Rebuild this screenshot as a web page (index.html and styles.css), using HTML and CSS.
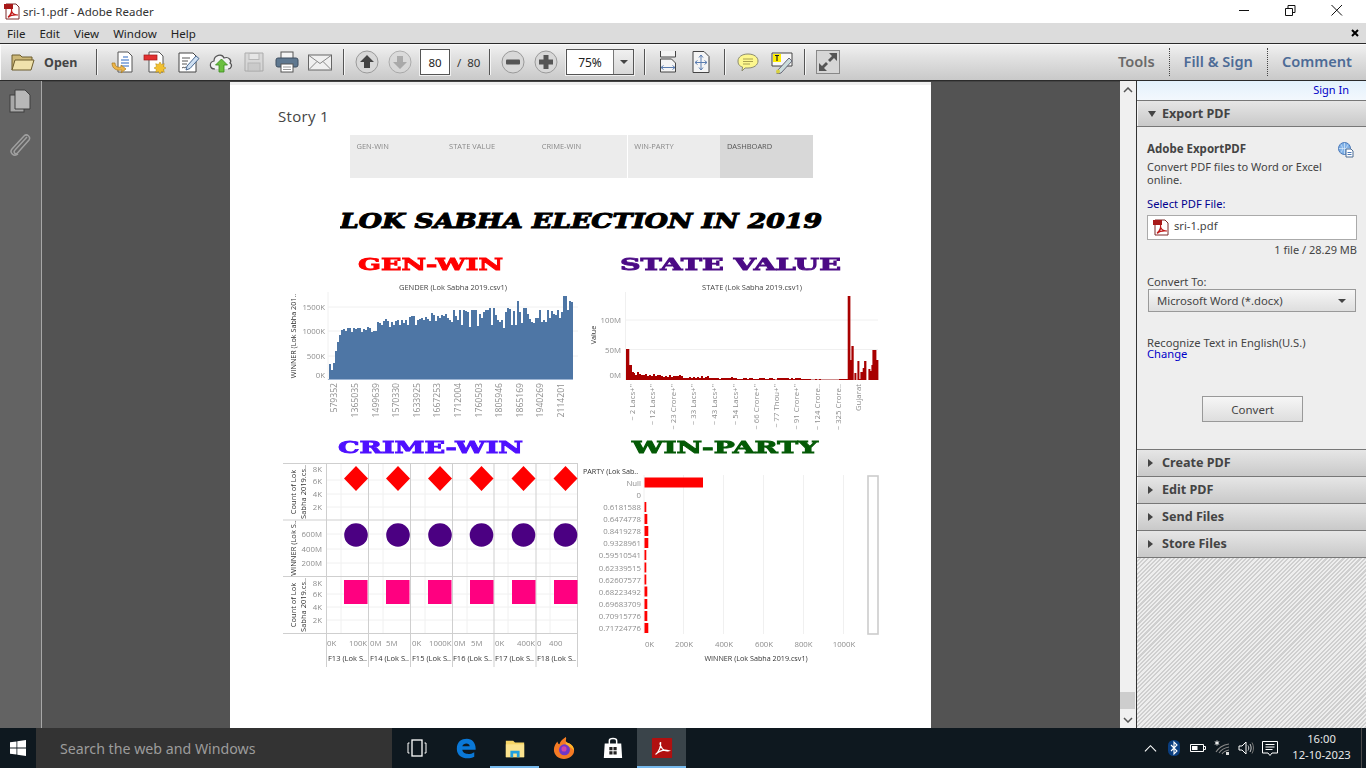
FILE: index.html
```html
<!DOCTYPE html>
<html lang="en">
<head>
<meta charset="utf-8">
<title>sri-1.pdf - Adobe Reader</title>
<link rel="stylesheet" href="styles.css">
</head>
<body>
<div class="app">
  <header class="titlebar">
    <svg class="pdficon" viewBox="0 0 18 17"><path d="M3 1h10l3 3v12H3z" fill="#fff" stroke="#7a2a2a"/><rect x="1" y="1" width="9" height="5" fill="#a81818"/><path d="M5 14c3-2 4-6 3.500-8M5 14c1 1 3-3 4-5 1 2 3 3 6 3-3-.5-7 0-10 2" fill="none" stroke="#c01818" stroke-width="1.200"/></svg>
    <span class="titletext">sri-1.pdf - Adobe Reader</span>
    <div class="winctl">
      <svg class="ctl" viewBox="0 0 46 23"><path d="M13 10.500h10" stroke="#111"/></svg>
      <svg class="ctl" viewBox="0 0 46 23"><path d="M13.500 8.500h7v7h-7zM16 8V5.500h7v7h-2.500" fill="none" stroke="#111"/></svg>
      <svg class="ctl" viewBox="0 0 46 23"><path d="M13.500 5l10.500 10.500M24 5L13.500 15.500" stroke="#111" fill="none"/></svg>
    </div>
  </header>

  <nav class="menubar">
    <span class="mi">File</span><span class="mi">Edit</span><span class="mi">View</span><span class="mi">Window</span><span class="mi">Help</span>
    <svg class="menuclose" viewBox="0 0 8 8"><path d="M1 1l6 6M7 1L1 7" stroke="#000" stroke-width="2"/></svg>
  </nav>

  <div class="toolbar">
    <div class="open">
      <svg class="i24" viewBox="0 0 24 20"><path d="M1 18V3h8l2 2h10v3" fill="#cdb878" stroke="#6d5c2c"/><path d="M1 18l3-10h19l-3 10z" fill="#f0e2ac" stroke="#6d5c2c"/></svg>
      <span class="opentext">Open</span>
    </div>
    <i class="sep"></i>
    <div class="grp grp-first">
      <svg class="i24" viewBox="0 0 24 24"><path d="M8 2h10l4 4v16H8z" fill="#fff" stroke="#555"/><path d="M11 10h8M11 13h8M11 16h8M13 7h5" stroke="#2a66c0"/><path d="M2 13c0 6 5 8 10 7l-1 3 5-4-5-4v2c-4 1-6-1-6-4z" fill="#eeb548" stroke="#a87a20" stroke-width=".7"/></svg>
      <svg class="i24" viewBox="0 0 24 24"><path d="M6 2h10l4 4v16H6z" fill="#fff" stroke="#555"/><rect x="1" y="5" width="13" height="5" fill="#e23030" stroke="#a01818" stroke-width=".7"/><path d="M17 12l1.500 2.500 2.800-.8-.8 2.800 2.500 1.500-2.500 1.500.8 2.800-2.800-.8-1.500 2.500-1.500-2.500-2.800.8.800-2.800-2.500-1.500 2.500-1.500-.8-2.800 2.800.8z" fill="#f2c030" stroke="#b58a10" stroke-width=".5"/></svg>
      <svg class="i24" viewBox="0 0 24 24"><path d="M3 3h14l3 3v16H3z" fill="#fff" stroke="#444"/><path d="M6 8h8M6 11h6M6 14h5M6 18c2-2 2 1 4-1" stroke="#555" fill="none"/><path d="M11 16l9-10 3 2.500-9 10-4 1.500z" fill="#cfe0f2" stroke="#4a6a92"/></svg>
      <svg class="i24" viewBox="0 0 24 24"><path d="M6 19c-6 0-6-7-1-8 0-6 8-8 10-3 5-2 8 3 6 5 3 2 1 6-2 6" fill="#f2f2f2" stroke="#555" stroke-width="1.200"/><path d="M12.500 9l6 6h-3.500v7h-5v-7H6.500z" fill="#6cc040" stroke="#3a8a20" stroke-width=".8"/></svg>
      <svg class="i24 dim" viewBox="0 0 24 24"><path d="M3 3h18v18H3z" fill="#d6d6d6" stroke="#999"/><rect x="7" y="3.500" width="10" height="6" fill="#e8e8e8" stroke="#aaa"/><rect x="6" y="13" width="12" height="8" fill="#c6c6c6" stroke="#aaa"/></svg>
      <svg class="i24" viewBox="0 0 24 24"><rect x="6" y="2" width="12" height="7" fill="#f4f4f4" stroke="#555"/><rect x="1" y="8" width="22" height="9" rx="2" fill="#5f7890" stroke="#3f4f60"/><rect x="6" y="14" width="12" height="8" fill="#fff" stroke="#555"/><path d="M8 17h8M8 19.500h8" stroke="#999"/></svg>
      <svg class="i24" viewBox="0 0 24 24"><rect x=".5" y="5" width="23" height="15" fill="#f0f0f0" stroke="#666"/><path d="M1 5.500l11 8 11-8M1 19.500l8-8M23 19.500l-8-8" fill="none" stroke="#888"/></svg>
    </div>
    <i class="sep"></i>
    <div class="grp">
      <svg class="i24" viewBox="0 0 24 24"><circle cx="12" cy="12" r="11" class="roundbtn"/><path d="M12 5l7 7h-4v6H9v-6H5z" fill="#444"/></svg>
      <svg class="i24 dim" viewBox="0 0 24 24"><circle cx="12" cy="12" r="11" class="roundbtn"/><path d="M12 19l7-7h-4V6H9v6H5z" fill="#999"/></svg>
      <span class="pagebox">80</span>
      <span class="pagetotal">/&nbsp; 80</span>
    </div>
    <i class="sep"></i>
    <div class="grp">
      <svg class="i24" viewBox="0 0 24 24"><circle cx="12" cy="12" r="11" class="roundbtn"/><rect x="5" y="9.500" width="14" height="5" rx="1" fill="#555"/></svg>
      <svg class="i24" viewBox="0 0 24 24"><circle cx="12" cy="12" r="11" class="roundbtn"/><path d="M9.500 5h5v4.500H19v5h-4.500V19h-5v-4.500H5v-5h4.500z" fill="#555"/></svg>
      <div class="zoombox"><span class="zoomval">75%</span><span class="zoomarrow"><i class="tri"></i></span></div>
    </div>
    <i class="sep"></i>
    <div class="grp">
      <svg class="i24" viewBox="0 0 24 24"><path d="M4.500 1v6h15V1M4.500 9h11l4 4v9h-15z" fill="#f4f4f4" stroke="#444"/><path d="M5 17.500h14M5 17.500l2.500-2M5 17.500l2.500 2M19 17.500l-2.500-2M19 17.500l-2.500 2" stroke="#5b7db0" fill="none"/></svg>
      <svg class="i24" viewBox="0 0 24 24"><path d="M4 1.500h11l5 5v16H4z" fill="#f4f4f4" stroke="#444"/><path d="M12 5v15M12 5l-2 2.500M12 5l2 2.500M12 20l-2-2.500M12 20l2-2.500M6 12.500h12M6 12.500l2.500-2M6 12.500l2.500 2M18 12.500l-2.500-2M18 12.500l-2.500 2" stroke="#5b7db0" fill="none"/></svg>
    </div>
    <i class="sep"></i>
    <div class="grp">
      <svg class="i24" viewBox="0 0 24 24"><path d="M12 4c6 0 10 3 10 7s-4 7-10 7H9l-3 3 .5-4C3 16 2 14 2 11c0-4 4-7 10-7z" fill="#fdf78e" stroke="#8a8a70"/><path d="M7 9h10M7 11.500h10M7 14h7" stroke="#a8a050"/></svg>
      <svg class="i24" viewBox="0 0 24 24"><path d="M3 3h20v13H3z" fill="#f8f8f8" stroke="#444"/><rect x="4" y="4" width="8" height="8" fill="#ffee00"/><path d="M6 5.500h4M8 5.500v5.500" stroke="#222" stroke-width="1.200"/><path d="M9 20l11-12 3 3-11 12-4 1z" fill="#cdd" stroke="#667"/><circle cx="9" cy="21.500" r="2" fill="#d8d040"/></svg>
    </div>
    <i class="sep"></i>
    <svg class="i24" viewBox="0 0 24 24"><rect x=".5" y=".5" width="23" height="23" fill="#d6d6d6" stroke="#888"/><path d="M21 3v8l-3-3-4 4-2-2 4-4-3-3zM3 21v-8l3 3 4-4 2 2-4 4 3 3z" fill="#555"/></svg>
    <div class="tabs">
      <span class="tab tab-tools">Tools</span>
      <span class="tab">Fill &amp; Sign</span>
      <span class="tab tab-last">Comment</span>
    </div>
  </div>

  <div class="main">
    <aside class="leftnav">
      <svg class="navicon" viewBox="0 0 22 24"><rect x="1" y="6" width="14" height="17" fill="#a8a8a8" stroke="#3f3f3f"/><path d="M6 1h10l5 5v14H6z" fill="#b8b8b8" stroke="#3f3f3f"/></svg>
      <svg class="navicon navclip" viewBox="0 0 22 24"><path d="M18 5L6 18c-2 2 0 5 2.500 3L20 8c2-3-2-7-5-4L3 17c-3 4 2 8 6 5" fill="none" stroke="#a0a0a0" stroke-width="1.500"/></svg>
    </aside>
    <section class="docarea">
      <article class="page">
        <h1 class="story">Story 1</h1>
        <div class="storytabs">
          <span class="stab">GEN-WIN</span><span class="stab">STATE VALUE</span><span class="stab stab-end">CRIME-WIN</span><span class="stab">WIN-PARTY</span><span class="stab stab-on">DASHBOARD</span>
        </div>
        <svg class="headline" viewBox="340 205 484 30" width="484" height="30">
          <text class="wide wide-i fk" x="340" y="228" textLength="482" lengthAdjust="spacingAndGlyphs">LOK SABHA ELECTION IN 2019</text>
        </svg>
        <div class="dash">
          <svg class="chart" viewBox="280 250 300 185" width="300" height="185">
            <text class="wide f-red" x="358" y="270" textLength="145" lengthAdjust="spacingAndGlyphs">GEN-WIN</text>
            <text class="ct" x="453" y="290" text-anchor="middle">GENDER (Lok Sabha 2019.csv1)</text>
            <path d="M328 292V380M328 307H578M328 331H578M328 356H578" class="grid"/>
            <path class="b-blue" d="M329 379V364h2V370h2V363h2V351h2V342h2V335h2V330h2V329h2V331h2V328h2V328h2V332h2V328h2V329h2V328h2V328h2V332h2V329h2V330h2V327h2V328h2V332h2V331h2V331h2V322h2V323h2V325h2V321h2V319h2V321h2V327h2V322h2V325h2V321h2V320h2V325h2V320h2V323h2V320h2V325h2V317h2V316h2V316h2V325h2V320h2V319h2V318h2V320h2V317h2V319h2V321h2V313h2V315h2V321h2V316h2V318h2V315h2V316h2V314h2V318h2V320h2V322h2V310h2V316h2V320h2V310h2V325h2V310h2V311h2V312h2V327h2V310h2V310h2V310h2V326h2V314h2V318h2V312h2V310h2V310h2V308h2V325h2V308h2V315h2V320h2V322h2V320h2V328h2V312h2V308h2V309h2V325h2V311h2V325h2V301h2V312h2V323h2V308h2V308h2V314h2V319h2V322h2V323h2V318h2V318h2V310h2V322h2V320h2V322h2V310h2V318h2V311h2V314h2V315h2V310h2V318h2V312h2V296h2V296h2V310h2V301h2V302h2V379z"/>
            <path d="M328 379.500H573" class="baseline-b"/>
            <text class="tick" x="325" y="310" text-anchor="end">1500K</text>
            <text class="tick" x="325" y="334" text-anchor="end">1000K</text>
            <text class="tick" x="325" y="359" text-anchor="end">500K</text>
            <text class="tick" x="325" y="378" text-anchor="end">0K</text>
            <text class="axl" transform="translate(296,336) rotate(-90)" text-anchor="middle">WINNER (Lok Sabha 201..</text>
            <g class="tick tick-long" text-anchor="end">
              <text transform="translate(337,383) rotate(-90)">579352</text>
              <text transform="translate(358,383) rotate(-90)">1365035</text>
              <text transform="translate(379,383) rotate(-90)">1499639</text>
              <text transform="translate(399,383) rotate(-90)">1570330</text>
              <text transform="translate(420,383) rotate(-90)">1633925</text>
              <text transform="translate(440,383) rotate(-90)">1667253</text>
              <text transform="translate(461,383) rotate(-90)">1712004</text>
              <text transform="translate(482,383) rotate(-90)">1760503</text>
              <text transform="translate(502,383) rotate(-90)">1805946</text>
              <text transform="translate(523,383) rotate(-90)">1865169</text>
              <text transform="translate(543,383) rotate(-90)">1940269</text>
              <text transform="translate(564,383) rotate(-90)">2114201</text>
            </g>
          </svg>
          <svg class="chart" viewBox="580 250 305 185" width="305" height="185">
            <text class="wide f-purple" x="620" y="270" textLength="221" lengthAdjust="spacingAndGlyphs">STATE VALUE</text>
            <text class="ct" x="752" y="290" text-anchor="middle">STATE (Lok Sabha 2019.csv1)</text>
            <path d="M625.500 292V380M625 320H878M625 349.500H878" class="grid"/>
            <path d="M626 379.500H847" class="baseline-r"/>
            <path class="b-red" d="M626 380V349h3.300V365h2.700V372h2V373h1V375h2V372h2V374h2V375h2V375h2V374h2V376h2V375h2V376h2V374h2V376h2V375h2V375h2V376h2V377h2V376h2V377h2V375h2V377h2V376h2V376h2V376h2V375h2V376h2V378h2V378h2V378h2V377h2V378h2V377h2V378h2V377h2V378h2V376h2V378h2V377h2V376h2V378h2V378h2V378h2V378h2V378h2V379h2V378h2V378h2V378h2V378h2V378h2V377h2V378h2V378h2V379h2V379h2V379h2V378h2V378h2V379h2V378h2V378h2V379h2V379h2V379h2V378h2V378h2V378h2V379h2V379h2V378h2V378h2V379h2V380h2V378h2V378h2V378h2V378h2V378h2V378h2V379h2V378h2V379h2V378h2V378h2V378h2V379h2V379h2V379h2V379h2V379h2V380h2V380h2V379h2V380h2V379h2V380h2V380h2V380h2V380h2V380h2V380h2V380h2V380h2V380h2V379h2V379h2V379h2V379h2.700V296h2.700V360h1V346h2.300V380h.7V373h2V380h1V361h2V379h1V372h2.300V368h1.400V361h2.300V380h2V369h2V371h1V365h1V350h4V360h2V380z"/>
            <text class="tick" x="621" y="323" text-anchor="end">100M</text>
            <text class="tick" x="621" y="353" text-anchor="end">50M</text>
            <text class="tick" x="621" y="378" text-anchor="end">0M</text>
            <text class="axl" transform="translate(596,335) rotate(-90)" text-anchor="middle">Value</text>
            <g class="tick" text-anchor="end">
              <text transform="translate(635,384) rotate(-90)">~ 2 Lacs+''</text>
              <text transform="translate(655,384) rotate(-90)">~ 12 Lacs+''</text>
              <text transform="translate(676,384) rotate(-90)">~ 23 Crore+''</text>
              <text transform="translate(696,384) rotate(-90)">~ 33 Lacs+''</text>
              <text transform="translate(717,384) rotate(-90)">~ 43 Lacs+''</text>
              <text transform="translate(738,384) rotate(-90)">~ 54 Lacs+''</text>
              <text transform="translate(759,384) rotate(-90)">~ 66 Crore+''</text>
              <text transform="translate(779,384) rotate(-90)">~ 77 Thou+''</text>
              <text transform="translate(799,384) rotate(-90)">~ 91 Crore+''</text>
              <text transform="translate(820,384) rotate(-90)">~ 124 Crore..</text>
              <text transform="translate(841,384) rotate(-90)">~ 325 Crore..</text>
              <text transform="translate(861,384) rotate(-90)">Gujarat</text>
            </g>
          </svg>
          <svg class="chart" viewBox="280 435 300 240" width="300" height="240">
            <text class="wide f-blue" x="338" y="453" textLength="185" lengthAdjust="spacingAndGlyphs">CRIME-WIN</text>
            <path class="grid" d="M341 464V633M383 464V633M425 464V633M467 464V633M508 464V633M550 464V633M326 480H578M326 494H578M326 507H578M326 534H578M326 549H578M326 563H578M326 594H578M326 607H578M326 620H578"/>
            <path class="panel" d="M283 463.500H578M283 520H578M283 576.500H578M283 633.500H578M326.500 463V667M368.500 463V667M410.500 463V667M452.500 463V667M494 463V667M536 463V667M577.500 463V667"/>
            <g class="m-red">
              <path d="M356 466l12 12.500-12 12.500-12-12.500zM398 466l12 12.500-12 12.500-12-12.500zM440 466l12 12.500-12 12.500-12-12.500zM481.500 466l12 12.500-12 12.500-12-12.500zM523.500 466l12 12.500-12 12.500-12-12.500zM565.500 466l12 12.500-12 12.500-12-12.500z"/>
            </g>
            <g class="m-purple">
              <circle cx="356" cy="535" r="11.800"/><circle cx="398" cy="535" r="11.800"/><circle cx="440" cy="535" r="11.800"/><circle cx="481.500" cy="535" r="11.800"/><circle cx="523.500" cy="535" r="11.800"/><circle cx="565.500" cy="535" r="11.800"/>
            </g>
            <g class="m-pink">
              <rect x="344" y="580" width="23.500" height="24"/><rect x="386" y="580" width="23.500" height="24"/><rect x="428" y="580" width="23.500" height="24"/><rect x="470" y="580" width="23.500" height="24"/><rect x="512" y="580" width="23.500" height="24"/><rect x="554" y="580" width="23.500" height="24"/>
            </g>
            <g class="tick" text-anchor="end">
              <text x="322" y="472">8K</text><text x="322" y="483.500">6K</text><text x="322" y="496.500">4K</text><text x="322" y="510">2K</text>
              <text x="322" y="537">600M</text><text x="322" y="552">400M</text><text x="322" y="566">200M</text>
              <text x="322" y="585.500">8K</text><text x="322" y="597">6K</text><text x="322" y="610">4K</text><text x="322" y="623">2K</text>
            </g>
            <g class="axl axl-lg" text-anchor="middle">
              <text transform="translate(296,492) rotate(-90)">Count of Lok</text>
              <text transform="translate(306,492) rotate(-90)">Sabha 2019.cs..</text>
              <text transform="translate(296,548) rotate(-90)">WINNER (Lok S..</text>
              <text transform="translate(296,605) rotate(-90)">Count of Lok</text>
              <text transform="translate(306,605) rotate(-90)">Sabha 2019.cs..</text>
            </g>
            <g class="tick">
              <text x="327" y="646">0K</text><text x="349" y="646">100K</text><text x="370" y="646">0M</text><text x="386" y="646">5M</text><text x="412" y="646">0K</text><text x="429" y="646">1000K</text><text x="454" y="646">0M</text><text x="471" y="646">5M</text><text x="495" y="646">0K</text><text x="517" y="646">400K</text><text x="537" y="646">0</text><text x="549" y="646">400</text>
            </g>
            <g class="axl axl-lg">
              <text x="328" y="661">F13 (Lok S..</text><text x="370" y="661">F14 (Lok S..</text><text x="412" y="661">F15 (Lok S..</text><text x="453" y="661">F16 (Lok S..</text><text x="495" y="661">F17 (Lok S..</text><text x="537" y="661">F18 (Lok S..</text>
            </g>
          </svg>
          <svg class="chart" viewBox="580 435 305 240" width="305" height="240">
            <text class="wide f-green" x="632" y="453" textLength="186" lengthAdjust="spacingAndGlyphs">WIN-PARTY</text>
            <path class="grid" d="M644 475V634M683.500 475V634M723.500 475V634M763.500 475V634M803.500 475V634M843.500 475V634"/>
            <g class="m-red">
              <rect x="644.500" y="477.500" width="58.500" height="10"/>
              <rect x="644.500" y="502" width="1.800" height="10"/><rect x="644.500" y="514" width="2.800" height="10"/><rect x="644.500" y="526" width="3.800" height="10"/><rect x="644.500" y="538" width="3.800" height="10"/><rect x="644.500" y="550" width="1.800" height="10"/><rect x="644.500" y="562.500" width="1.800" height="10"/><rect x="644.500" y="574.500" width="1.800" height="10"/><rect x="644.500" y="586.500" width="2.800" height="10"/><rect x="644.500" y="599" width="2.800" height="10"/><rect x="644.500" y="611" width="2.800" height="10"/><rect x="644.500" y="623" width="3.800" height="10"/>
            </g>
            <rect class="scrollbox" x="868" y="476" width="10" height="158"/>
            <text class="axl" x="583" y="474">PARTY (Lok Sab..</text>
            <g class="tick" text-anchor="end">
              <text x="641" y="485.500">Null</text><text x="641" y="497.500">0</text><text x="641" y="510">0.6181588</text><text x="641" y="522">0.6474778</text><text x="641" y="534">0.8419278</text><text x="641" y="546">0.9328961</text><text x="641" y="558">0.59510541</text><text x="641" y="570.500">0.62339515</text><text x="641" y="582.500">0.62607577</text><text x="641" y="594.500">0.68223492</text><text x="641" y="607">0.69683709</text><text x="641" y="619">0.70915776</text><text x="641" y="631">0.71724776</text>
            </g>
            <g class="tick" text-anchor="middle">
              <text x="649.500" y="647">0K</text><text x="684" y="647">200K</text><text x="724" y="647">400K</text><text x="764" y="647">600K</text><text x="803.500" y="647">800K</text><text x="844" y="647">1000K</text>
            </g>
            <text class="axl" x="756" y="661" text-anchor="middle">WINNER (Lok Sabha 2019.csv1)</text>
          </svg>
        </div>
      </article>
    </section>
    <div class="vscroll">
      <svg class="chev" viewBox="0 0 10 6"><path d="M1 5l4-4 4 4" fill="none" stroke="#555" stroke-width="1.500"/></svg>
      <span class="thumb"></span>
      <svg class="chev" viewBox="0 0 10 6"><path d="M1 1l4 4 4-4" fill="none" stroke="#555" stroke-width="1.500"/></svg>
    </div>
    <aside class="panel-r">
      <div class="signin"><a class="link">Sign In</a></div>
      <div class="sec sec-open"><i class="tri-sec"></i>Export PDF</div>
      <div class="body">
        <div class="bh"><strong class="bt">Adobe ExportPDF</strong>
          <svg class="globe" viewBox="0 0 16 16"><circle cx="6.500" cy="6.500" r="6" fill="#7fb0e6" stroke="#4a78b8"/><path d="M1 6.500h11M6.500 1v11M3 2.500c2 3 2 5 0 8M10 2.500c-2 3-2 5 0 8" fill="none" stroke="#dcecfb" stroke-width=".7"/><path d="M8 7h5l2 2v6H8z" fill="#fff" stroke="#4a6a92"/><path d="M9.500 10.500h4M9.500 12.500h4" stroke="#4a78b8"/></svg>
        </div>
        <p class="desc">Convert PDF files to Word or Excel<br>online.</p>
        <div class="link lbl">Select PDF File:</div>
        <div class="filebox">
          <svg class="fileicon" viewBox="0 0 18 17"><path d="M3 1h10l3 3v12H3z" fill="#fff" stroke="#7a2a2a"/><rect x="1" y="1" width="9" height="5" fill="#a81818"/><path d="M5 14c3-2 4-6 3.500-8M5 14c1 1 3-3 4-5 1 2 3 3 6 3-3-.5-7 0-10 2" fill="none" stroke="#c01818" stroke-width="1.200"/></svg>
          <span class="filename">sri-1.pdf</span>
        </div>
        <div class="filesize">1 file / 28.29 MB</div>
        <div class="convlbl">Convert To:</div>
        <div class="select"><span>Microsoft Word (*.docx)</span><i class="tri"></i></div>
        <div class="rec">Recognize Text in English(U.S.)</div>
        <div class="link chg">Change</div>
        <div class="btn">Convert</div>
      </div>
      <div class="sec sec-c"><i class="tri-r"></i>Create PDF</div>
      <div class="sec sec-c"><i class="tri-r"></i>Edit PDF</div>
      <div class="sec sec-c"><i class="tri-r"></i>Send Files</div>
      <div class="sec sec-c"><i class="tri-r"></i>Store Files</div>
      <div class="hatch"></div>
    </aside>
  </div>

  <footer class="taskbar">
    <div class="start"><svg class="winlogo" viewBox="0 0 16 16"><path d="M0 2.300l6.500-.9v6.200H0zM7.300 1.300L16 0v7.600H7.300zM0 8.400h6.500v6.200L0 13.700zM7.300 8.400H16V16l-8.700-1.300z" fill="#fff"/></svg></div>
    <div class="search">Search the web and Windows</div>
    <div class="slot"><svg class="i20" viewBox="0 0 20 20"><rect x="5" y="2" width="10" height="16" fill="none" stroke="#fff" stroke-width="1.300"/><path d="M2.500 5H1v10h1.500M17.500 5H19v10h-1.500" fill="none" stroke="#fff"/></svg></div>
    <div class="slot"><svg class="i24t" viewBox="0 0 24 24"><path d="M2 13C2 5 7 2 13 2c6 0 10 5 9.500 12H8c.5 5 8 6 13 2.500v5c-8 4-19 1-19-8.500zm6-3h8c0-4-7-4-8 0z" fill="#0a78d7"/></svg></div>
    <div class="slot slot-on"><svg class="i24t" viewBox="0 0 24 24"><path d="M2 4h8l2 2h10v16H2z" fill="#f6d465"/><path d="M2 8h20v14H2z" fill="#fbe38e"/><path d="M7 22v-7h10v7h-3v-4h-4v4z" fill="#20a0e0"/></svg></div>
    <div class="slot"><svg class="i24t" viewBox="0 0 24 24"><path d="M14 0c1 3-1 4 1 6 4 1 8 4 8 9 0 5-5 9-11 9S1 20 1 14c0-4 2-7 4-9 0 2 1 3 2 3 1-4 4-6 7-8z" fill="#f57a24"/><path d="M14 0c1 3-1 4 1 6 4 1 8 4 8 9-2-3-5-5-9-5z" fill="#ffb428"/><circle cx="12.500" cy="14" r="6" fill="#6f37c8"/><circle cx="12" cy="13" r="2.800" fill="#d043a8"/></svg></div>
    <div class="slot"><svg class="i24t" viewBox="0 0 24 24"><path d="M3 7h18l1 16H2z" fill="#fff"/><path d="M8 8V4c0-3 8-3 8 0v4" fill="none" stroke="#fff" stroke-width="1.600"/><path d="M8 11h3.500v3.500H8zM12.500 11H16v3.500h-3.500zM8 15.500h3.500V19H8zM12.500 15.500H16V19h-3.500z" fill="#222"/></svg></div>
    <div class="slot slot-act"><svg class="i24t" viewBox="0 0 24 24"><rect x="1" y="1" width="22" height="22" rx="1" fill="#b01010"/><path d="M5 19c4-3 6-9 5.500-13-1 0-1 3 2 7 2 2 5 2.500 7 2-3-1-9-1-14.500 4z" fill="none" stroke="#fff" stroke-width="1.300"/></svg></div>
    <div class="tray">
      <div class="tslot"><svg class="i14" viewBox="0 0 14 14"><path d="M1 10l6-6 6 6" fill="none" stroke="#fff" stroke-width="1.200"/></svg></div>
      <div class="tslot"><svg class="i16" viewBox="0 0 12 16"><rect width="12" height="16" rx="5.500" fill="#0a3e80"/><path d="M3 5l6 6-3 3V2l3 3-6 6" fill="none" stroke="#fff" stroke-width="1.100"/></svg></div>
      <div class="tslot"><svg class="i16" viewBox="0 0 16 16"><path d="M.5 4.500h13v7H.5zM14 6.500h1.500v3H14" fill="none" stroke="#fff"/><rect x="2" y="6" width="5.500" height="4" fill="#fff"/></svg></div>
      <div class="tslot"><svg class="i16" viewBox="0 0 16 16"><path d="M3 .5v5M.8 1.700l4.400 2.600M5.200 1.700L.8 4.300" stroke="#fff"/><path d="M2 12c3-5 7-7 13-8M5 13c2-3 5-5 10-6M8 14c1-2 3-3 7-4" fill="none" stroke="#888" stroke-width="1.100"/><rect x="12" y="12" width="3" height="3" fill="#ddd"/></svg></div>
      <div class="tslot"><svg class="i16" viewBox="0 0 16 16"><path d="M1 6h3l4-4v12l-4-4H1z" fill="none" stroke="#fff"/><path d="M10 5.500c1 1.500 1 3.500 0 5M12 4c1.500 2.500 1.500 5.500 0 8" fill="none" stroke="#ccc"/><path d="M14 2.500c2 3.500 2 7.500 0 11" fill="none" stroke="#777"/></svg></div>
      <div class="tslot"><svg class="i16h" viewBox="0 0 16 17"><path d="M.5 1.500h15v11.500H10L8 15.500 6 13H.5z" fill="none" stroke="#fff"/><path d="M3.500 4.500h9M3.500 7h9M3.500 9.500h7" stroke="#fff"/></svg></div>
      <div class="clock"><span>16:00</span><span>12-10-2023</span></div>
      <i class="showdesk"></i>
    </div>
  </footer>
</div>
</body>
</html>
```

FILE: styles.css
```css
* { box-sizing: border-box; }
html, body { margin: 0; padding: 0; height: 100%; overflow: hidden; }
body { font-family: "Noto Sans", "Open Sans", sans-serif; font-size: 11.5px; color: #333; }
.app { width: 1366px; height: 768px; display: flex; flex-direction: column; }

/* title bar */
.titlebar { height: 23px; background: #fff; display: flex; align-items: center; padding-left: 3px; flex: none; }
.pdficon { width: 18px; height: 17px; }
.titletext { margin-left: 2px; font-size: 11.5px; color: #333; }
.winctl { margin-left: auto; display: flex; margin-right: 2px; }
.ctl { width: 46px; height: 23px; display: block; }

/* menu */
.menubar { height: 20px; background: #dcdcdc; display: flex; align-items: center; padding-left: 7px; gap: 14px; flex: none; }
.mi { font-size: 11.5px; color: #222; }
.menuclose { width: 8px; height: 8px; margin-left: auto; margin-right: 7px; }

/* tool bar */
.toolbar { height: 38px; flex: none; display: flex; align-items: center; padding-left: 11px; background: linear-gradient(#f2f2f2, #e2e2e2 35%, #c9c9c9); border-top: 1px solid #2b2b2b; border-bottom: 1px solid #2b2b2b; box-shadow: inset 1px 1px 0 #fafafa; }
.i24 { width: 24px; height: 24px; display: block; flex: none; }
.dim { opacity: .75; }
.open { display: flex; align-items: center; width: 66px; }
.opentext { margin-left: 9px; font-weight: 700; font-size: 12.5px; color: #444; }
.sep { width: 1px; height: 26px; background: #555; box-shadow: 1px 0 0 #f5f5f5; margin: 0 11px; flex: none; }
.open + .sep { margin: 0 13px 0 19px; }
.grp { display: flex; align-items: center; gap: 9px; }
.roundbtn { fill: #d8d8d8; stroke: #9a9a9a; }
.pagebox { width: 30px; height: 26px; background: #fff; border: 1px solid #555; outline: 1px solid #f0f0f0; display: flex; align-items: center; justify-content: center; font-size: 11.5px; color: #222; margin-left: -1px; }
.pagetotal { width: 21px; font-size: 11.5px; color: #333; margin-left: -2px; white-space: nowrap; }
.zoombox { width: 68px; height: 26px; background: #fff; border: 1px solid #555; outline: 1px solid #f0f0f0; display: flex; margin: 0 -1px 0 -1px; }
.zoomval { width: 46px; display: flex; align-items: center; justify-content: center; font-size: 12px; color: #222; }
.zoomarrow { flex: 1; background: linear-gradient(#f0f0f0, #d8d8d8); border-left: 1px solid #777; display: flex; align-items: center; justify-content: center; }
.tri { display: block; width: 0; height: 0; border-left: 4px solid transparent; border-right: 4px solid transparent; border-top: 4px solid #444; }
.tabs { margin-left: auto; display: flex; align-items: center; height: 100%; }
.tab { padding: 0 14px 2px; font-size: 14.600px; font-weight: 600; color: #4d6b96; height: 28px; display: flex; align-items: center; border-right: 1px dotted #444; white-space: nowrap; }
.tab-tools { color: #6a6a6a; }
.tab-last { border-right: 0; }

/* main */
.main { flex: 1; display: flex; min-height: 0; background: #535353; }
.leftnav { width: 42px; flex: none; background: #636363; border-right: 1px solid #a8a8a8; display: flex; flex-direction: column; align-items: center; padding-top: 8px; padding-right: 2px; }
.navicon { width: 22px; height: 24px; display: block; }
.navclip { margin-top: 19px; }
.docarea { width: 1078px; flex: none; padding-left: 188px; border-top: 1px solid #444; overflow: hidden; }
.page { width: 701px; height: 646px; background: #fff; border-top: 3px solid #efefef; overflow: hidden; }
.story { margin: 21px 0 0 48px; font-family: "Open Sans", sans-serif; font-size: 15px; font-weight: 400; letter-spacing: .3px; line-height: 20px; color: #444; }
.storytabs { margin: 9px 0 0 120px; width: 463px; height: 43px; display: flex; background: #ececec; }
.stab { width: 92.600px; padding: 6px 0 0 6.500px; font-family: "Open Sans", sans-serif; font-size: 7.500px; color: #8a8a8a; filter: blur(.2px); }
.stab-end { border-right: 1px solid #fff; }
.stab-on { background: #d8d8d8; color: #555; }
.headline { display: block; margin: 27px 0 0 110px; }
.dash { margin: 15px 0 0 50px; display: grid; grid-template-columns: 300px 305px; grid-template-rows: 185px 240px; }
.chart { display: block; filter: blur(.3px); }
.wide { font-family: "DejaVu Serif", "Liberation Serif", serif; font-weight: 700; font-size: 16px; stroke-width: .8px; }
.wide-i { font-size: 20px; font-style: italic; stroke-width: 1px; }
.fk { fill: #000; stroke: #000; }
.f-red { fill: #f00; stroke: #f00; }
.f-purple { fill: #4b0a85; stroke: #4b0a85; }
.f-blue { fill: #4f10ff; stroke: #4f10ff; }
.f-green { fill: #045a06; stroke: #045a06; }
.ct { font-family: "Open Sans", sans-serif; font-size: 7.500px; fill: #444; }
.tick { font-family: "Open Sans", sans-serif; font-size: 7.800px; fill: #8e8e8e; }
.tick-long { font-size: 8.600px; }
.axl { font-family: "Open Sans", sans-serif; font-size: 7.200px; fill: #333; }
.axl-lg { font-size: 7.500px; }
.grid { stroke: #f0f0f0; fill: none; }
.panel { stroke: #cfcfcf; fill: none; }
.b-blue { fill: #4e76a5; }
.b-red { fill: #a80000; }
.baseline-b { stroke: #9fb6d4; fill: none; }
.baseline-r { stroke: #d08f8f; fill: none; }
.m-red { fill: #f00; }
.m-purple { fill: #4b0082; }
.m-pink { fill: #ff0080; }
.scrollbox { fill: #fff; stroke: #ccc; stroke-width: 1.600; }

/* scroll bar */
.vscroll { width: 16px; flex: none; background: #f0f0f0; display: flex; flex-direction: column; align-items: center; padding-top: 6px; }
.chev { width: 10px; height: 6px; display: block; }
.thumb { width: 15px; height: 17px; background: #cdcdcd; margin: 599px 1px 0 0; display: block; }
.vscroll .chev:last-child { margin-top: 8px; }

/* right panel */
.panel-r { width: 230px; flex: none; border-left: 1px solid #333; display: flex; flex-direction: column; background: #eee; }
.signin { height: 19px; background: linear-gradient(#e3f1fc, #f3f8fd); text-align: right; padding-right: 17px; line-height: 18px; font-size: 11px; }
.link { color: #0000c8; }
.sec { height: 27px; flex: none; background: linear-gradient(#e6e6e6, #c9c9c9); border-top: 1px solid #777; display: flex; align-items: center; font-weight: 700; font-size: 12.600px; color: #444; box-shadow: inset 1px 0 0 #f5f5f5; }
.sec-open { border-bottom: 1px solid #777; }
.sec-c { padding-bottom: 1px; }
.tri-sec { margin: 0 6px 0 11px; width: 0; height: 0; border-style: solid; border-width: 6px 4px 0; border-color: #444 transparent transparent; }
.tri-r { width: 0; height: 0; margin: 0 9px 0 11px; border-top: 4px solid transparent; border-bottom: 4px solid transparent; border-left: 5px solid #444; }
.body { height: 322px; flex: none; padding: 15px 9px 0 10px; background: #eee; }
.bh { display: flex; justify-content: space-between; align-items: flex-start; padding-right: 3px; height: 14px; }
.bt { font-weight: 700; font-size: 11.500px; line-height: 14px; color: #444; }
.globe { width: 16px; height: 16px; display: block; }
.desc { margin: 4px 0 0; line-height: 13px; color: #444; font-size: 11px; }
.lbl { margin-top: 11px; line-height: 14px; font-size: 11.200px; color: #00008e; }
.filebox { margin-top: 4px; height: 25px; background: #fff; border: 1px solid #aaa; display: flex; align-items: flex-start; padding: 3px 0 0 4px; }
.fileicon { width: 18px; height: 17px; flex: none; }
.filename { margin-left: 4px; font-size: 11.200px; line-height: 13px; color: #444; }
.filesize { margin-top: 3px; text-align: right; line-height: 14px; font-size: 11px; color: #444; }
.convlbl { margin-top: 18px; line-height: 14px; font-size: 11.200px; color: #444; }
.select { margin: 0 1px; height: 23px; background: linear-gradient(#f6f6f6, #dedede); border: 1px solid #999; display: flex; align-items: center; justify-content: space-between; padding: 0 9px 0 8px; font-size: 11.300px; color: #444; }
.rec { margin-top: 25px; line-height: 11px; font-size: 11.200px; color: #444; }
.chg { line-height: 11px; font-size: 11.200px; }
.btn { margin: 37px 0 0 55px; width: 101px; height: 26px; background: linear-gradient(#f6f6f6, #dedede); border: 1px solid #999; display: flex; align-items: center; justify-content: center; font-size: 11.500px; color: #444; }
.hatch { flex: 1; border-top: 1px solid #777; background: repeating-linear-gradient(-45deg, #cfcfcf 0 1.500px, #eeeeee 1.500px 3px); }

/* task bar */
.taskbar { height: 40px; flex: none; background: #0e181f; display: flex; align-items: stretch; color: #fff; }
.start { width: 36px; display: flex; align-items: center; justify-content: center; }
.winlogo { width: 16px; height: 16px; display: block; }
.search { width: 356px; background: #333; color: #9c9c9c; font-size: 14.200px; display: flex; align-items: center; padding-left: 24px; }
.slot { width: 49px; display: flex; align-items: center; justify-content: center; }
.slot-on { box-shadow: inset 0 -2px 0 #76b9ed; }
.slot-act { background: #3a444a; box-shadow: inset 0 -2px 0 #76b9ed; }
.i20 { width: 20px; height: 20px; display: block; }
.i24t { width: 22px; height: 22px; display: block; }
.tray { margin-left: auto; display: flex; align-items: stretch; }
.tslot { width: 24px; display: flex; align-items: center; justify-content: center; }
.i14 { width: 13px; height: 13px; display: block; }
.i16 { width: 16px; height: 16px; display: block; }
.i16h { width: 16px; height: 17px; display: block; }
.clock { width: 79px; display: flex; flex-direction: column; align-items: center; justify-content: center; padding-bottom: 2px; font-size: 11.200px; line-height: 16px; color: #e8e8e8; }
.showdesk { width: 5px; border-left: 1px solid #4a4a4a; display: block; }
```
